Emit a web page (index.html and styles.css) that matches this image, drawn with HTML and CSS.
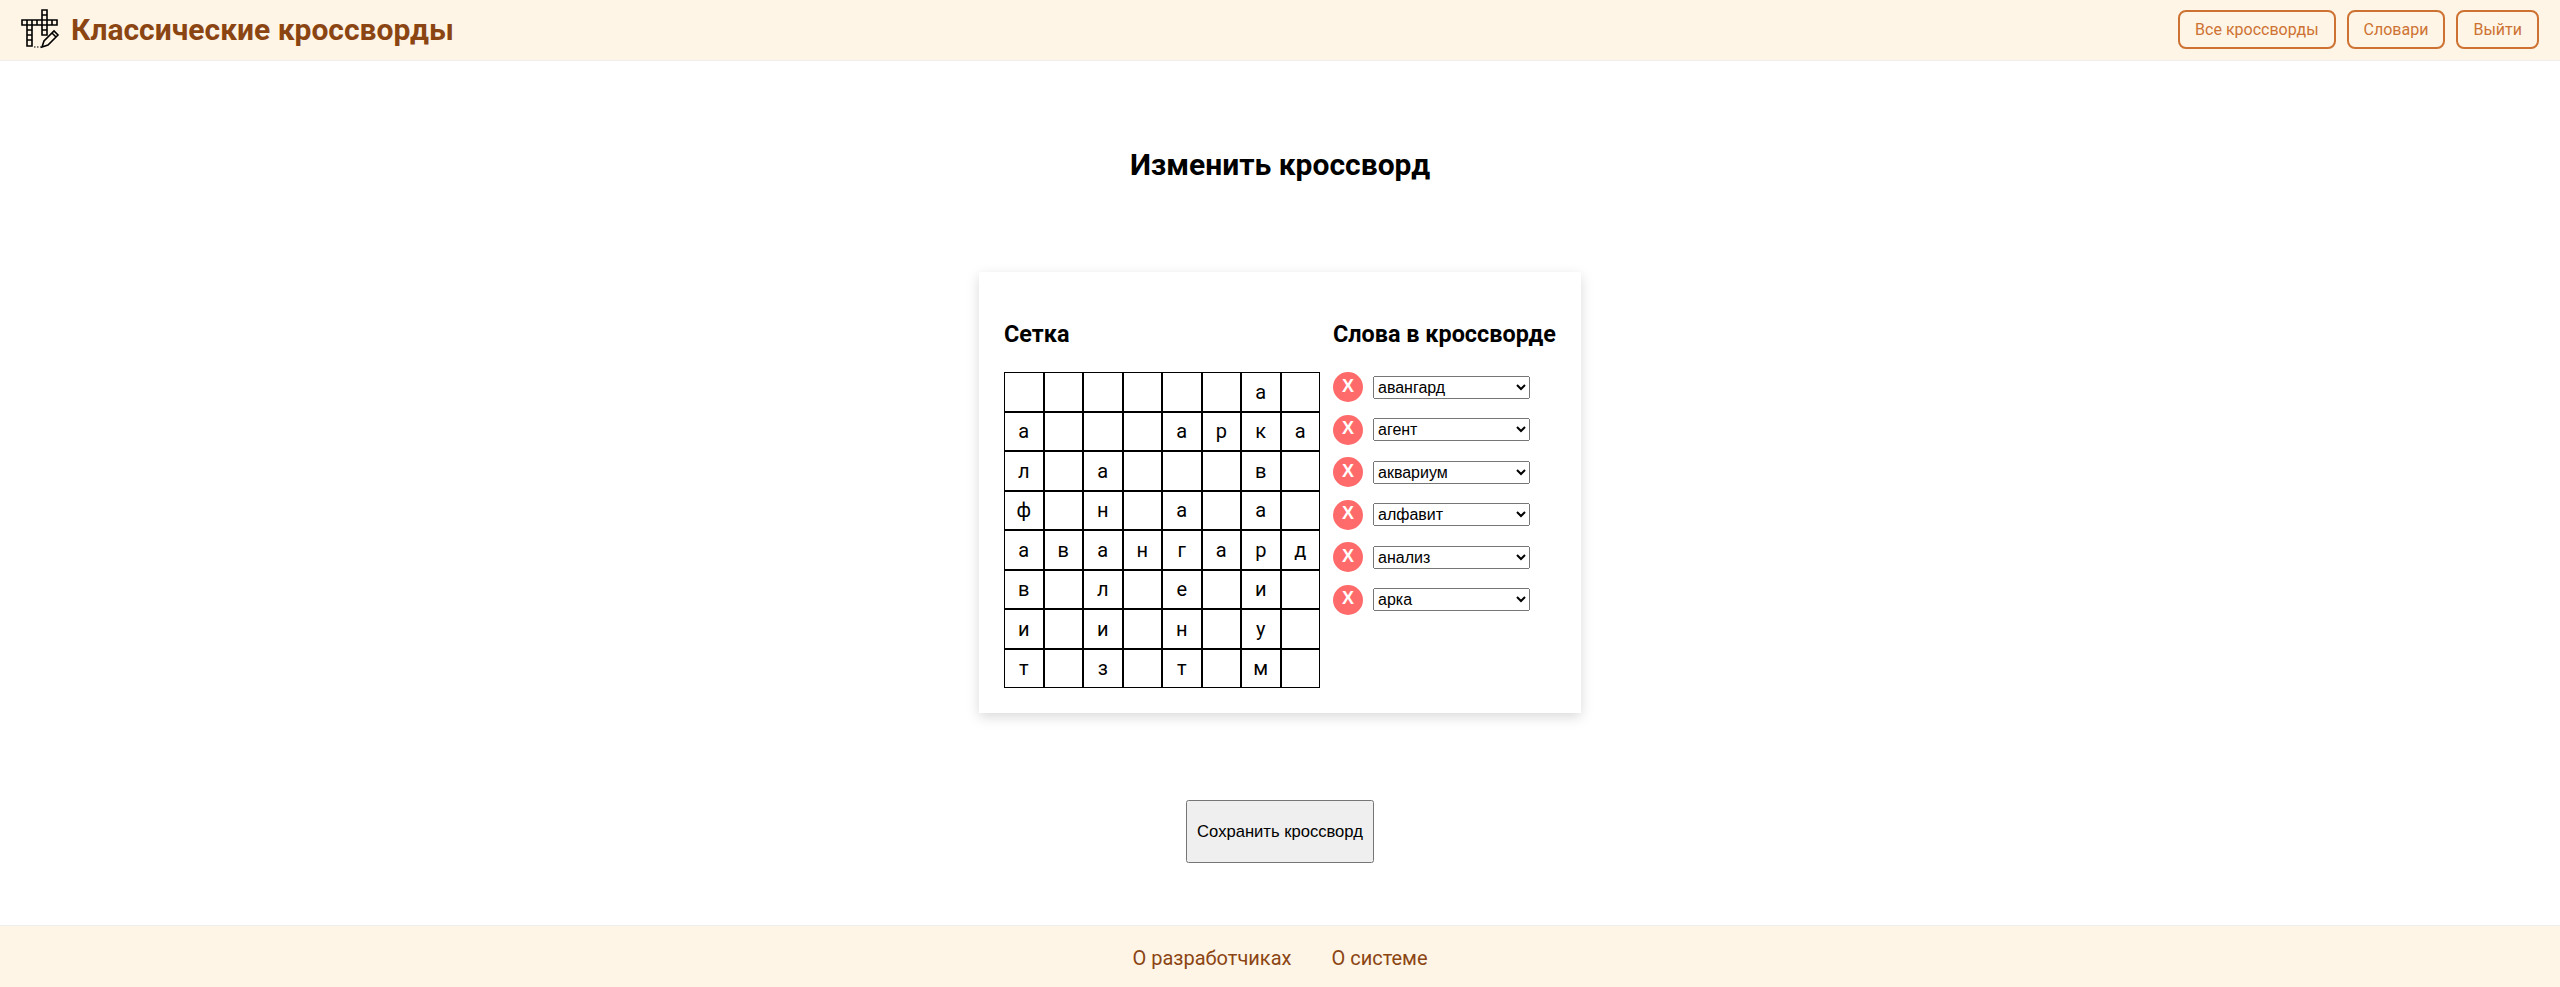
FILE: index.html
```html
<!DOCTYPE html>
<html lang="ru">
<head>
    <meta charset="UTF-8">
    <title>Изменить кроссворд</title>
    <link rel="stylesheet" href="styles.css">
</head>
<body>

    <header class="topbar">
        <a class="brand" href="#">
            <!-- Logo: crossword squares with a pencil -->
            <svg class="brand-icon" viewBox="0 0 40 40" width="40" height="40">
                <g fill="none" stroke="#000" stroke-width="1.6">
                    <path d="M2 11h35v5H2zM7 11v5M12 11v5M17 11v5M22 11v5M27 11v5M32 11v5"/>
                    <path d="M7 16v21h5V16M7 21h5M7 26h5M7 31h5"/>
                    <path d="M22 11V1h5v10M22 6h5M22 16v10h5V16M22 21h5"/>
                </g>
                <path d="M22 38l2-6 10-10 4 4-10 10zM32 24l4 4" fill="#fff5e6" stroke="#000" stroke-width="1.6"/>
                <path d="M14 38h1.500M17 38h1.500M20 38h1.500" stroke="#000" stroke-width="1.200"/>
            </svg>
            <span class="brand-title">Классические кроссворды</span>
        </a>
        <nav class="topnav">
            <button class="nav-btn">Все кроссворды</button>
            <button class="nav-btn">Словари</button>
            <button class="nav-btn">Выйти</button>
        </nav>
    </header>

    <main class="page">
        <h1 class="page-title">Изменить кроссворд</h1>

        <section class="editor">
            <div class="grid-column">
                <h2 class="column-title">Сетка</h2>
                <div class="crossword">
                    <div class="cell"></div><div class="cell"></div><div class="cell"></div><div class="cell"></div><div class="cell"></div><div class="cell"></div><div class="cell">а</div><div class="cell"></div>
                    <div class="cell">а</div><div class="cell"></div><div class="cell"></div><div class="cell"></div><div class="cell">а</div><div class="cell">р</div><div class="cell">к</div><div class="cell">а</div>
                    <div class="cell">л</div><div class="cell"></div><div class="cell">а</div><div class="cell"></div><div class="cell"></div><div class="cell"></div><div class="cell">в</div><div class="cell"></div>
                    <div class="cell">ф</div><div class="cell"></div><div class="cell">н</div><div class="cell"></div><div class="cell">а</div><div class="cell"></div><div class="cell">а</div><div class="cell"></div>
                    <div class="cell">а</div><div class="cell">в</div><div class="cell">а</div><div class="cell">н</div><div class="cell">г</div><div class="cell">а</div><div class="cell">р</div><div class="cell">д</div>
                    <div class="cell">в</div><div class="cell"></div><div class="cell">л</div><div class="cell"></div><div class="cell">е</div><div class="cell"></div><div class="cell">и</div><div class="cell"></div>
                    <div class="cell">и</div><div class="cell"></div><div class="cell">и</div><div class="cell"></div><div class="cell">н</div><div class="cell"></div><div class="cell">у</div><div class="cell"></div>
                    <div class="cell">т</div><div class="cell"></div><div class="cell">з</div><div class="cell"></div><div class="cell">т</div><div class="cell"></div><div class="cell">м</div><div class="cell"></div>
                </div>
            </div>

            <div class="words-column">
                <h2 class="column-title">Слова в кроссворде</h2>
                <ul class="word-list">
                    <li class="word-row">
                        <button class="remove-btn">X</button>
                        <select class="word-select"><option>авангард</option></select>
                    </li>
                    <li class="word-row">
                        <button class="remove-btn">X</button>
                        <select class="word-select"><option>агент</option></select>
                    </li>
                    <li class="word-row">
                        <button class="remove-btn">X</button>
                        <select class="word-select"><option>аквариум</option></select>
                    </li>
                    <li class="word-row">
                        <button class="remove-btn">X</button>
                        <select class="word-select"><option>алфавит</option></select>
                    </li>
                    <li class="word-row">
                        <button class="remove-btn">X</button>
                        <select class="word-select"><option>анализ</option></select>
                    </li>
                    <li class="word-row">
                        <button class="remove-btn">X</button>
                        <select class="word-select"><option>арка</option></select>
                    </li>
                </ul>
            </div>
        </section>

        <button class="save-btn">Сохранить кроссворд</button>
    </main>

    <footer class="bottombar">
        <a class="footer-link" href="#">О разработчиках</a>
        <a class="footer-link" href="#">О системе</a>
    </footer>

</body>
</html>
```

FILE: styles.css
```css
/* Base Styling */
body {
    font-family: 'Roboto', sans-serif;
    background-color: #fff;
    color: #000;
    margin: 0;
    padding: 0;
    height: 987px;
    display: flex;
    flex-direction: column;
    overflow: hidden;
}

/* Header */
.topbar {
    box-sizing: border-box;
    height: 61px;
    background-color: #fff5e6;
    border-bottom: 1px solid #eeeeee;
    padding: 0 21px 2px 20px;
    display: flex;
    justify-content: space-between;
    align-items: center;
}

.brand {
    display: flex;
    align-items: center;
    gap: 11px;
    text-decoration: none;
}

.brand-title {
    font-size: 30px;
    font-weight: 700;
    color: #8b4513;
}

.topnav {
    display: flex;
    gap: 11px;
}

.nav-btn {
    font-family: 'Roboto', sans-serif;
    font-size: 16px;
    color: #cd7232;
    background-color: transparent;
    border: 2px solid #cd7232;
    border-radius: 8px;
    height: 39px;
    padding: 0 15px;
}

/* Main */
.page {
    flex: 1;
    display: flex;
    flex-direction: column;
    align-items: center;
}

.page-title {
    font-size: 30px;
    font-weight: 700;
    margin: 0;
    padding-top: 85px;
    line-height: 38px;
}

.editor {
    margin-top: 88px;
    width: 602px;
    box-sizing: border-box;
    padding: 24px 25px 25px;
    display: flex;
    gap: 13px;
    background-color: #fff;
    box-shadow: 0 4px 12px rgba(0, 0, 0, 0.15);
}

.column-title {
    font-size: 23.400px;
    font-weight: 700;
    line-height: 28px;
    margin: 24px 0;
    white-space: nowrap;
}

.crossword {
    display: grid;
    grid-template-columns: repeat(8, 39.5px);
    grid-auto-rows: 39.5px;
}

.cell {
    border: 1px solid #000;
    display: flex;
    align-items: center;
    justify-content: center;
    font-size: 20px;
}

.word-list {
    list-style: none;
    margin: 0;
    padding: 0;
    display: flex;
    flex-direction: column;
    gap: 12.600px;
}

.word-row {
    display: flex;
    align-items: center;
    gap: 10px;
    height: 30px;
}

.remove-btn {
    width: 30px;
    height: 30px;
    border: none;
    border-radius: 50%;
    padding: 0 0 2px;
    background-color: #ff6b6b;
    color: #fff;
    font-family: 'Liberation Sans', Arial, sans-serif;
    font-size: 18px;
    font-weight: 700;
}

.word-select {
    width: 157px;
    height: 23px;
    font-family: 'Liberation Sans', Arial, sans-serif;
    font-size: 16px;
}

.save-btn {
    margin-top: 87px;
    width: 188px;
    height: 63px;
    padding: 0;
    font-family: 'Liberation Sans', Arial, sans-serif;
    font-size: 16.600px;
}

/* Footer */
.bottombar {
    box-sizing: border-box;
    height: 62px;
    padding-top: 3px;
    background-color: #fff5e6;
    border-top: 1px solid #eeeeee;
    display: flex;
    justify-content: center;
    align-items: center;
    gap: 40px;
}

.footer-link {
    font-size: 20px;
    color: #8b4513;
    text-decoration: none;
}
```
